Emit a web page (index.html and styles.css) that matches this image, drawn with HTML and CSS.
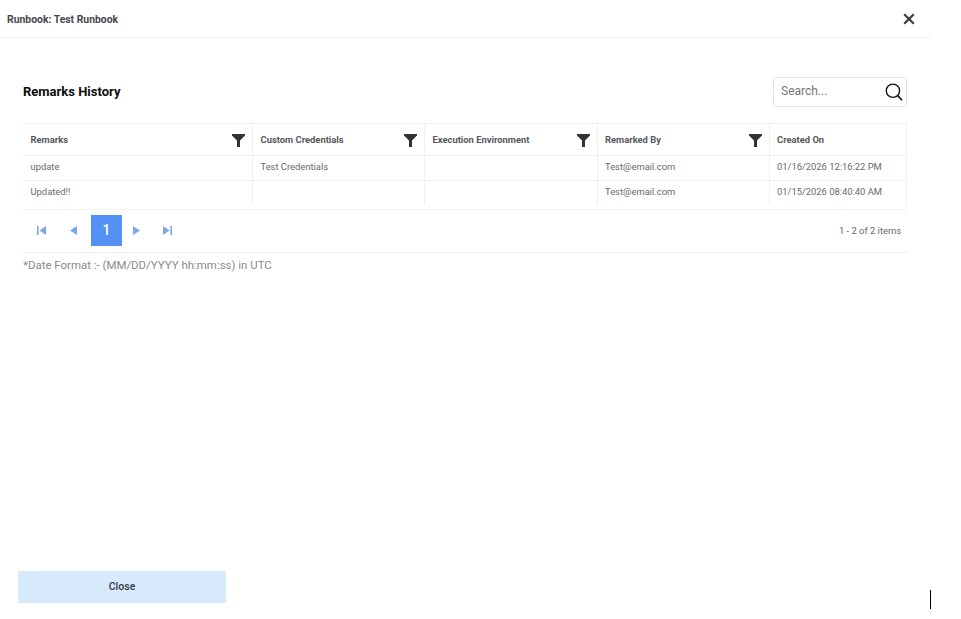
FILE: index.html
```html
<!DOCTYPE html>
<html lang="en">
<head>
<meta charset="utf-8">
<title>Remarks History</title>
<link rel="stylesheet" href="styles.css">
</head>
<body>
<div class="modal">
  <header class="modal-head">
    <span class="modal-title">Runbook: Test Runbook</span>
    <svg class="close-x" viewBox="0 0 12 12" width="12" height="12"><path d="M1.2 1.2 10.8 10.8M10.8 1.2 1.2 10.8" stroke="#3f3f46" stroke-width="2.3" fill="none"/></svg>
  </header>
  <main class="modal-body">
    <div class="title-row">
      <h2 class="section-title">Remarks History</h2>
      <div class="search">
        <span class="search-text">Search...</span>
        <svg viewBox="0 0 20 20" width="18" height="18"><circle cx="8.8" cy="8.6" r="7.4" stroke="#111" stroke-width="1.5" fill="none"/><path d="M13.8 13.8 19 19.2" stroke="#111" stroke-width="1.8" fill="none"/></svg>
      </div>
    </div>
    <div class="grid">
      <div class="row head">
        <div class="cell">Remarks<svg class="filter" viewBox="0 0 13 13" width="13" height="13"><path d="M0 0H13V1.6L8 6.6V13H5V6.6L0 1.6Z"/></svg></div>
        <div class="cell">Custom Credentials<svg class="filter" viewBox="0 0 13 13" width="13" height="13"><path d="M0 0H13V1.6L8 6.6V13H5V6.6L0 1.6Z"/></svg></div>
        <div class="cell">Execution Environment<svg class="filter" viewBox="0 0 13 13" width="13" height="13"><path d="M0 0H13V1.6L8 6.6V13H5V6.6L0 1.6Z"/></svg></div>
        <div class="cell">Remarked By<svg class="filter" viewBox="0 0 13 13" width="13" height="13"><path d="M0 0H13V1.6L8 6.6V13H5V6.6L0 1.6Z"/></svg></div>
        <div class="cell">Created On</div>
      </div>
      <div class="row data">
        <div class="cell">update</div>
        <div class="cell">Test Credentials</div>
        <div class="cell"></div>
        <div class="cell">Test@email.com</div>
        <div class="cell">01/16/2026 12:16:22 PM</div>
      </div>
      <div class="row data last">
        <div class="cell">Updated!!</div>
        <div class="cell"></div>
        <div class="cell"></div>
        <div class="cell">Test@email.com</div>
        <div class="cell">01/15/2026 08:40:40 AM</div>
      </div>
    </div>
    <div class="pager">
      <div class="pages">
        <svg class="nav" viewBox="0 0 9 9" width="9" height="9"><path d="M0 0H1.6V9H0ZM9 0V9L2.4 4.5Z"/></svg>
        <svg class="nav" viewBox="0 0 9 9" width="9" height="9"><path d="M8 0V9L1 4.5Z"/></svg>
        <span class="page-current">1</span>
        <svg class="nav" viewBox="0 0 9 9" width="9" height="9"><path d="M1 0V9L8 4.5Z"/></svg>
        <svg class="nav" viewBox="0 0 9 9" width="9" height="9"><path d="M0 0V9L6.6 4.5ZM7.4 0H9V9H7.4Z"/></svg>
      </div>
      <span class="page-info">1 - 2 of 2 items</span>
    </div>
    <p class="note">*Date Format :- (MM/DD/YYYY hh:mm:ss) in UTC</p>
  </main>
  <footer class="modal-foot">
    <button class="close-btn" type="button">Close</button>
  </footer>
</div>
<span class="caret"></span>
</body>
</html>
```
FILE: styles.css
```css
* { box-sizing: border-box; }
html, body { margin: 0; height: 100%; }
body { background: #fff; font-family: Roboto, "Liberation Sans", sans-serif; overflow: hidden; }
.modal { width: 931px; height: 619px; display: flex; flex-direction: column; }
.modal-head { height: 38px; flex: none; display: flex; align-items: center; justify-content: space-between; padding: 0 16px 0 7px; border-bottom: 1px solid #eceef0; }
.modal-title { font-size: 10.4px; font-weight: 700; color: #47474d; padding-top: 1px; }
.close-x { display: block; }
.modal-body { flex: 1; padding: 39px 24px 0 23px; }
.title-row { display: flex; align-items: center; justify-content: space-between; height: 30px; margin-bottom: 16px; }
.section-title { margin: 0 0 2px; font-size: 13px; font-weight: 700; color: #0c0c0c; }
.search { width: 134px; height: 30px; display: flex; align-items: center; justify-content: space-between; padding: 0 3px 0 7px; border: 1px solid #dfe2e6; border-radius: 3px; }
.search-text { font-size: 12px; color: #757575; padding-bottom: 3px; }
.grid { border-top: 1px solid #f0f1f3; border-right: 1px solid #f0f1f3; }
.row { display: grid; grid-template-columns: 230px 172px 173px 172px 1fr; }
.row.head { height: 32px; border-bottom: 1px solid #eef0f2; }
.row.data { height: 25px; border-bottom: 1px solid #f0f1f3; }
.row.data.last { height: 24px; border-bottom: 0; margin-right: -1px; }
.cell { display: flex; align-items: center; justify-content: space-between; padding: 0 7px 0 7.5px; font-size: 9.4px; color: #66696e; border-right: 1px solid #eef0f2; white-space: nowrap; }
.data .cell { padding-bottom: 3px; }
.head .cell { font-weight: 700; color: #55585d; padding-bottom: 1px; }
.cell:nth-child(n+4) { padding-left: 7px; }
.cell:last-child { border-right: 0; }
.filter { display: block; fill: #333; margin-top: 2px; }
.pager { margin-top: 4px; height: 44px; display: flex; align-items: center; justify-content: space-between; padding: 0 6px 2px 0; border-top: 1px solid #f0f1f3; border-bottom: 1px solid #eceef0; }
.pages { display: flex; align-items: center; }
.nav { display: block; fill: #7da7e8; margin: 0 11px; }
.pages .nav:first-child { margin-left: 14px; margin-right: 23px; }
.pages .nav:nth-child(2) { margin-left: 0; margin-right: 13px; }
.pages .nav:nth-child(4) { margin-left: 10px; margin-right: 11px; }
.page-current { width: 31px; height: 31px; display: flex; align-items: center; justify-content: center; background: #5591f5; color: #fff; font-size: 14px; font-weight: 500; }
.page-info { font-size: 9.4px; color: #66696e; }
.note { margin: 5px 0 0; font-size: 11.45px; line-height: 14px; color: #8a8a8a; }
.modal-foot { flex: none; padding: 0 0 16px 18px; }
.close-btn { display: block; width: 208px; height: 32px; padding: 0 0 2px; border: 0; background: #d6eafc; color: #33383f; font-family: inherit; font-size: 10.5px; font-weight: 500; }
.caret { position: absolute; left: 930px; top: 590px; width: 1px; height: 19px; background: #000; }
```
